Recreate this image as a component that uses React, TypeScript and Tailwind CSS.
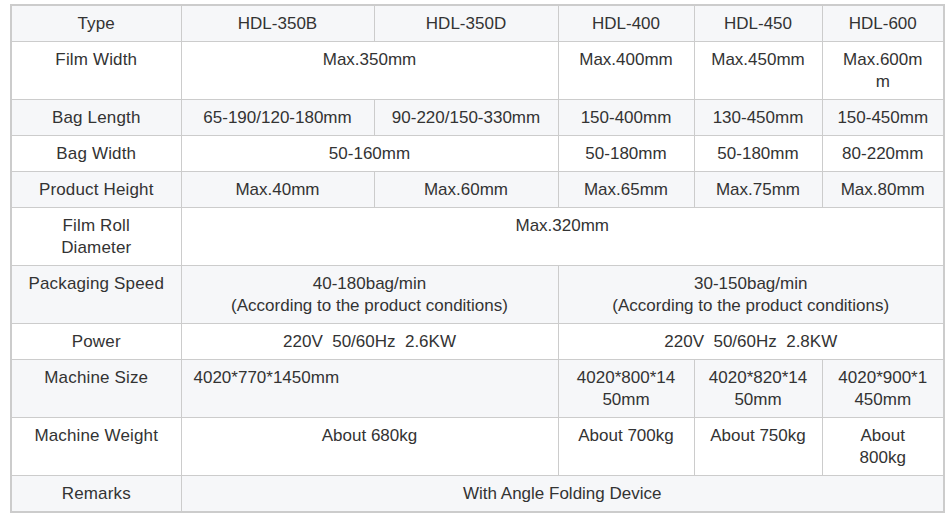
type Cell = { text: string; span?: number; left?: boolean };

const rows: { label: string; cells: Cell[] }[] = [
  {
    label: "Type",
    cells: [
      { text: "HDL-350B" },
      { text: "HDL-350D" },
      { text: "HDL-400" },
      { text: "HDL-450" },
      { text: "HDL-600" },
    ],
  },
  {
    label: "Film Width",
    cells: [
      { text: "Max.350mm", span: 2 },
      { text: "Max.400mm" },
      { text: "Max.450mm" },
      { text: "Max.600m\nm" },
    ],
  },
  {
    label: "Bag Length",
    cells: [
      { text: "65-190/120-180mm" },
      { text: "90-220/150-330mm" },
      { text: "150-400mm" },
      { text: "130-450mm" },
      { text: "150-450mm" },
    ],
  },
  {
    label: "Bag Width",
    cells: [
      { text: "50-160mm", span: 2 },
      { text: "50-180mm" },
      { text: "50-180mm" },
      { text: "80-220mm" },
    ],
  },
  {
    label: "Product Height",
    cells: [
      { text: "Max.40mm" },
      { text: "Max.60mm" },
      { text: "Max.65mm" },
      { text: "Max.75mm" },
      { text: "Max.80mm" },
    ],
  },
  {
    label: "Film Roll\nDiameter",
    cells: [{ text: "Max.320mm", span: 5 }],
  },
  {
    label: "Packaging Speed",
    cells: [
      { text: "40-180bag/min\n(According to the product conditions)", span: 2 },
      { text: "30-150bag/min\n(According to the product conditions)", span: 3 },
    ],
  },
  {
    label: "Power",
    cells: [
      { text: "220V  50/60Hz  2.6KW", span: 2 },
      { text: "220V  50/60Hz  2.8KW", span: 3 },
    ],
  },
  {
    label: "Machine Size",
    cells: [
      { text: "4020*770*1450mm", span: 2, left: true },
      { text: "4020*800*14\n50mm" },
      { text: "4020*820*14\n50mm" },
      { text: "4020*900*1\n450mm" },
    ],
  },
  {
    label: "Machine Weight",
    cells: [
      { text: "About 680kg", span: 2 },
      { text: "About 700kg" },
      { text: "About 750kg" },
      { text: "About\n800kg" },
    ],
  },
  {
    label: "Remarks",
    cells: [{ text: "With Angle Folding Device", span: 5 }],
  },
];

export default function App() {
  return (
    <div className="w-[952px] h-[514px] bg-white pl-[10px] pt-[4px] font-['Liberation_Sans',Arial,sans-serif] text-[17px] leading-[22px] text-[#333]">
      <table className="w-[933px] table-fixed border-collapse border-2 border-[#ccc]">
        <colgroup>
          <col className="w-[170px]" />
          <col className="w-[193px]" />
          <col className="w-[184px]" />
          <col className="w-[136px]" />
          <col className="w-[128px]" />
          <col className="w-[122px]" />
        </colgroup>
        <tbody>
          {rows.map((r, i) => (
            <tr key={r.label} className={i % 2 === 0 ? "bg-[#f6f7f9]" : "bg-white"}>
              <td className="border border-[#ccc] px-[10px] pt-[7px] pb-[6px] align-top text-center whitespace-pre-line tracking-[0.15px]">
                {r.label}
              </td>
              {r.cells.map((c, j) => (
                <td
                  key={j}
                  colSpan={c.span}
                  className={
                    "border border-[#ccc] pt-[7px] pb-[6px] align-top whitespace-pre " +
                    (c.left ? "text-left pl-[12px] pr-[8px]" : "text-center px-[8px]")
                  }
                >
                  {c.text}
                </td>
              ))}
            </tr>
          ))}
        </tbody>
      </table>
    </div>
  );
}
